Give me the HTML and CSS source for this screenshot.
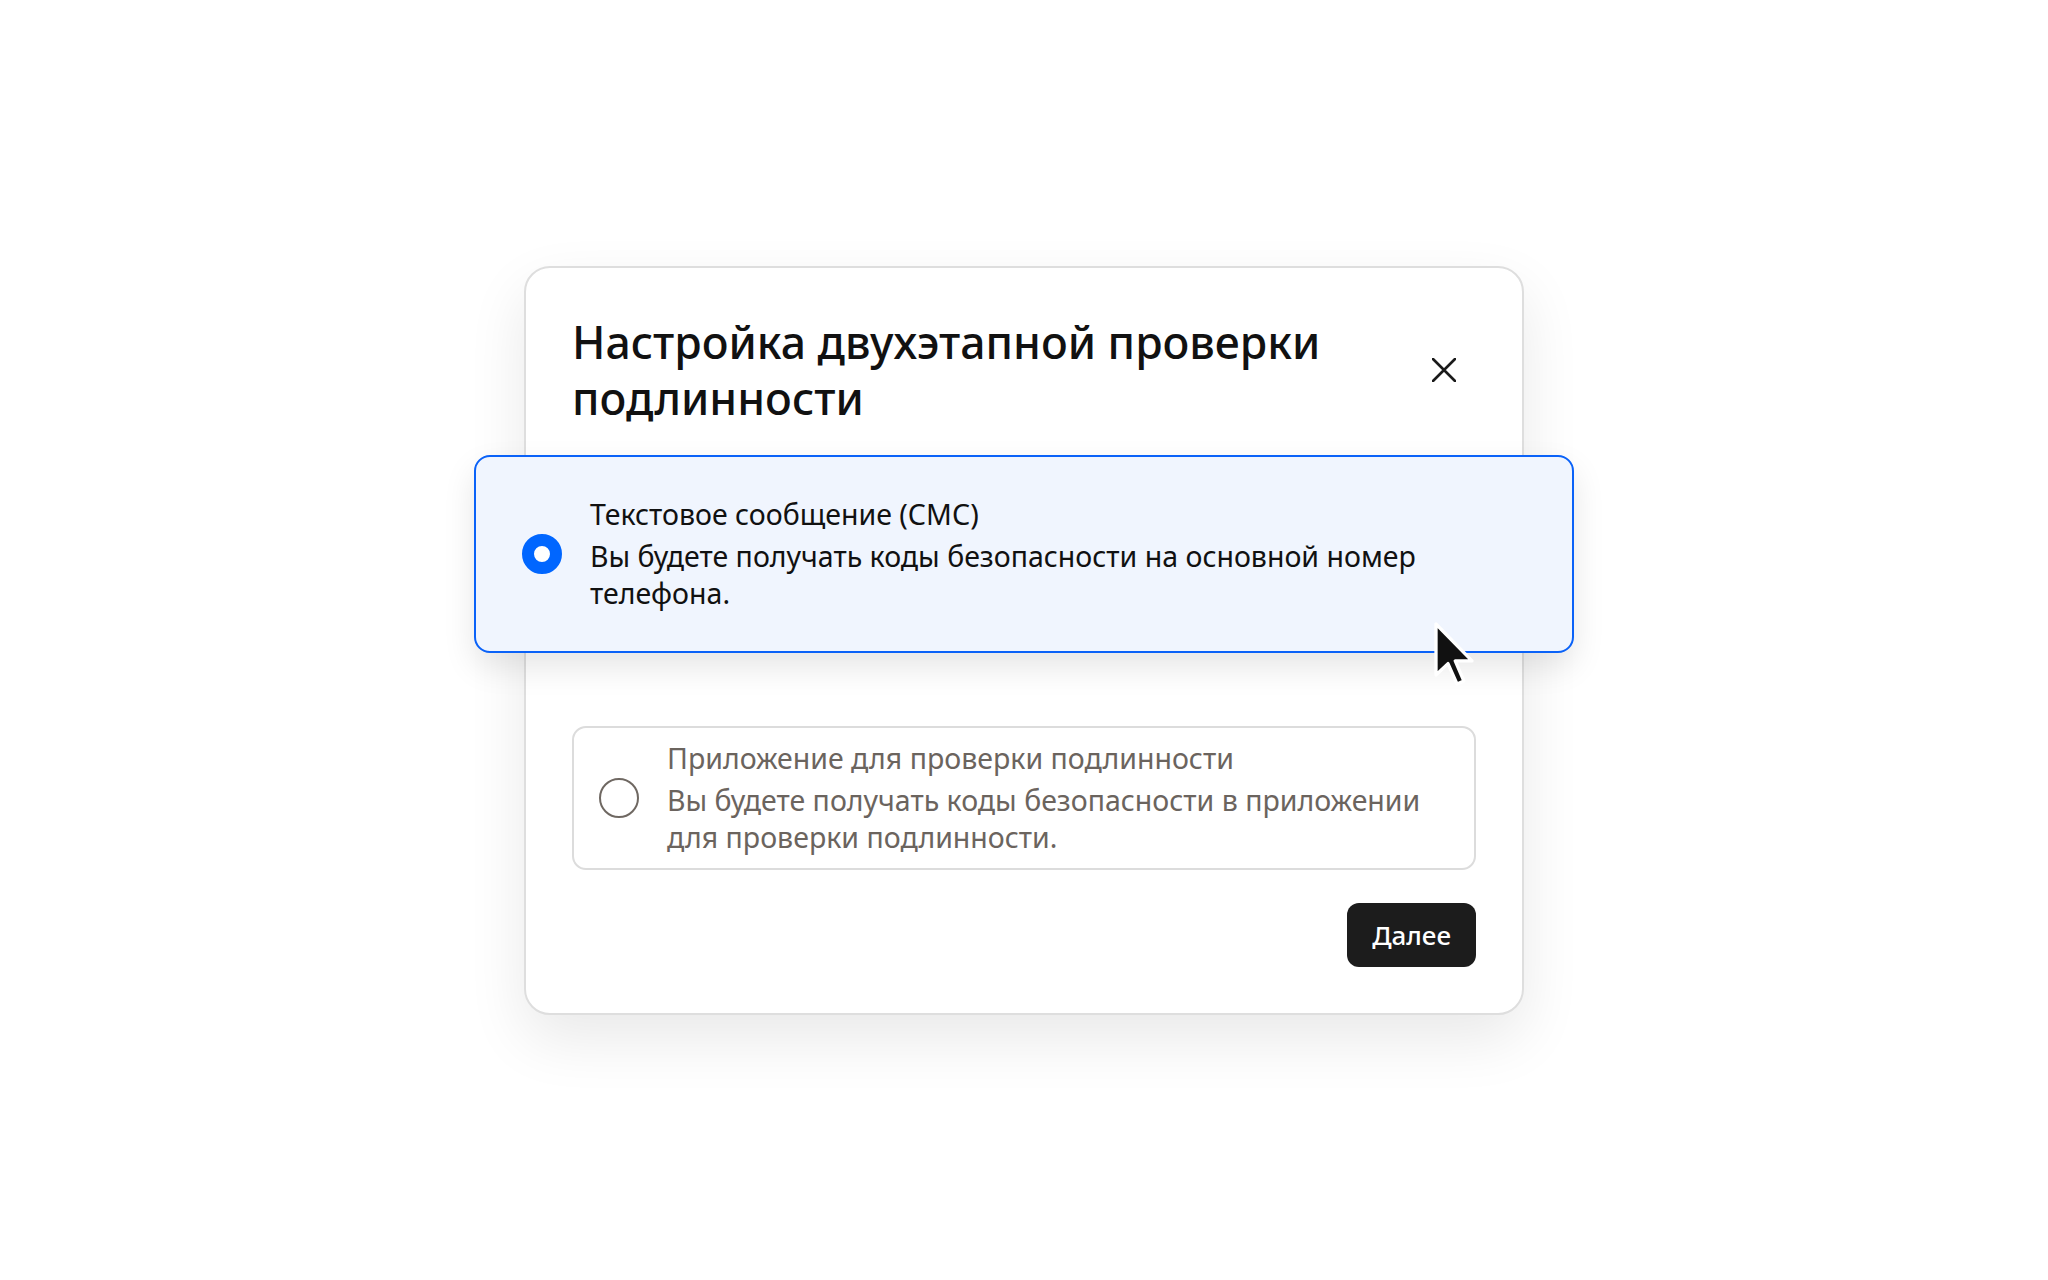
FILE: index.html
```html
<!DOCTYPE html>
<html lang="ru">
<head>
  <meta charset="UTF-8">
  <meta name="viewport" content="width=device-width, initial-scale=1.0">
  <title>Двухэтапная проверка подлинности</title>
  <link rel="stylesheet" href="styles.css">
</head>
<body>
  <div class="dialog">
    <div class="dialog__header">
      <h1>Настройка двухэтапной проверки подлинности</h1>
      <button class="dialog__close" aria-label="Закрыть">
        <svg width="24" height="24" viewBox="0 0 24 24"><path d="M1 1L23 23M23 1L1 23" stroke="#1a1a1a" stroke-width="2.6" stroke-linecap="round"/></svg>
      </button>
    </div>

    <label class="option option--active">
      <span class="radio radio--checked"></span>
      <span class="option__text">
        <span class="option__title">Текстовое сообщение (СМС)</span>
        <span class="option__desc">Вы будете получать коды безопасности на основной номер телефона.</span>
      </span>
      <svg class="cursor" width="48" height="72" viewBox="-2 -2 16 24">
        <path d="M0 0L0 17L4 13.2L7 20L9.3 19L6.4 12.3L12 12.3Z" fill="#111" stroke="#fff" stroke-width="1.1" stroke-linejoin="round"/>
      </svg>
    </label>

    <label class="option">
      <span class="radio"></span>
      <span class="option__text">
        <span class="option__title">Приложение для проверки подлинности</span>
        <span class="option__desc">Вы будете получать коды безопасности в приложении для проверки подлинности.</span>
      </span>
    </label>

    <div class="dialog__footer">
      <button class="btn">Далее</button>
    </div>
  </div>
</body>
</html>
```

FILE: styles.css
```css
body {
  margin: 0;
  min-height: 100vh;
  display: flex;
  align-items: center;
  justify-content: center;
  background: #ffffff;
  font-family: "Noto Sans", "Open Sans", sans-serif;
  color: #111111;
}
.dialog {
  box-sizing: border-box;
  width: 1000px;
  background: #ffffff;
  border: 2px solid #dedede;
  border-radius: 26px;
  padding: 46px;
  box-shadow: 0 24px 60px rgba(0, 0, 0, 0.09);
  display: flex;
  flex-direction: column;
}
.dialog__header {
  display: flex;
  align-items: center;
  justify-content: space-between;
  gap: 24px;
  margin-bottom: 29px;
}
.dialog__header h1 {
  margin: 0;
  font-size: 44.5px;
  line-height: 56px;
  font-weight: 500;
  color: #111111;
}
.dialog__close {
  flex: none;
  width: 40px;
  height: 40px;
  margin-right: 12px;
  padding: 0;
  border: none;
  background: none;
  display: flex;
  align-items: center;
  justify-content: center;
  cursor: pointer;
}
.option {
  position: relative;
  display: flex;
  align-items: center;
  gap: 28px;
  padding: 12px 25px;
  border: 2px solid #dcdcdc;
  border-radius: 14px;
  color: #6b645e;
  cursor: pointer;
}
.option--active {
  margin: 0 -98px 73px;
  padding: 39px 48px 39px 46px;
  border-color: #0a62f8;
  background: #f0f5fe;
  border-radius: 16px;
  color: #111111;
  box-shadow: 0 14px 32px rgba(0, 0, 0, 0.1);
}
.radio {
  flex: none;
  box-sizing: border-box;
  width: 40px;
  height: 40px;
  border-radius: 50%;
  border: 2px solid #6f6862;
}
.radio--checked {
  border: 12px solid #0066ff;
  background: #ffffff;
}
.option__text {
  display: flex;
  flex-direction: column;
  gap: 5px;
  font-size: 28.5px;
  line-height: 37px;
}
.option__title {
  font-weight: 400;
}
.cursor {
  position: absolute;
  left: 954px;
  top: 161px;
}
.dialog__footer {
  display: flex;
  justify-content: flex-end;
  margin-top: 33px;
}
.btn {
  height: 64px;
  padding: 0 25px;
  border: none;
  border-radius: 12px;
  background: #1c1c1c;
  color: #ffffff;
  font-family: inherit;
  font-size: 26px;
  font-weight: 500;
  cursor: pointer;
}
```
